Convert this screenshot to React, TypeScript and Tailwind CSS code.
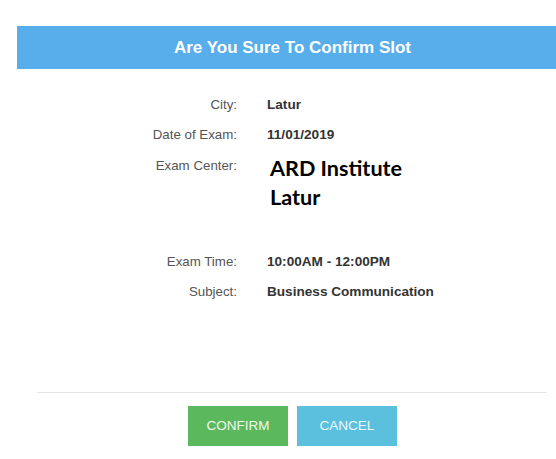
import React from "react";

const Row = ({ label, value }: { label: string; value: string }) => (
  <div className="flex h-[30px] items-center">
    <div className="w-[220px] text-right text-[13.3px] text-[#555]">{label}</div>
    <div className="ml-[30px] text-[13.6px] font-bold text-[#333]">{value}</div>
  </div>
);

export default function App() {
  return (
    <div
      className="relative h-[459px] w-[556px] overflow-hidden bg-white"
      style={{ fontFamily: '"Liberation Sans", Arial, sans-serif' }}
    >
      <div className="ml-[17px] w-[551px] pt-[26px]">
        <div className="flex h-[43px] items-center justify-center bg-[#58adeb] text-[17px] font-bold text-white">
          Are You Sure To Confirm Slot
        </div>
        <div className="pt-[21px]">
          <Row label="City:" value="Latur" />
          <Row label="Date of Exam:" value="11/01/2019" />
          <div className="mt-[1px] flex items-start">
            <div className="w-[220px] text-right text-[13.3px] leading-[30px] text-[#555]">
              Exam Center:
            </div>
            <div
              className="ml-[33px] mt-[3px] text-[21.6px] font-bold leading-[29px] text-black"
              style={{ fontFamily: 'Lato, "Open Sans", sans-serif' }}
            >
              <div>ARD Institute</div>
              <div>Latur</div>
            </div>
          </div>
          <div className="mt-[35px]">
            <Row label="Exam Time:" value="10:00AM - 12:00PM" />
            <Row label="Subject:" value="Business Communication" />
          </div>
        </div>
        <div className="ml-[20px] mt-[85px] h-px w-[509px] bg-[#e5e5e5]" />
        <div className="mt-[13px] flex justify-center gap-[9px]">
          <button className="flex h-[40px] w-[100px] items-center justify-center bg-[#5cb85c] text-[13.5px] text-[#eef8ee]">
            CONFIRM
          </button>
          <button className="flex h-[40px] w-[100px] items-center justify-center bg-[#5bc0de] text-[13.5px] text-[#eef8fb]">
            CANCEL
          </button>
        </div>
      </div>
    </div>
  );
}
